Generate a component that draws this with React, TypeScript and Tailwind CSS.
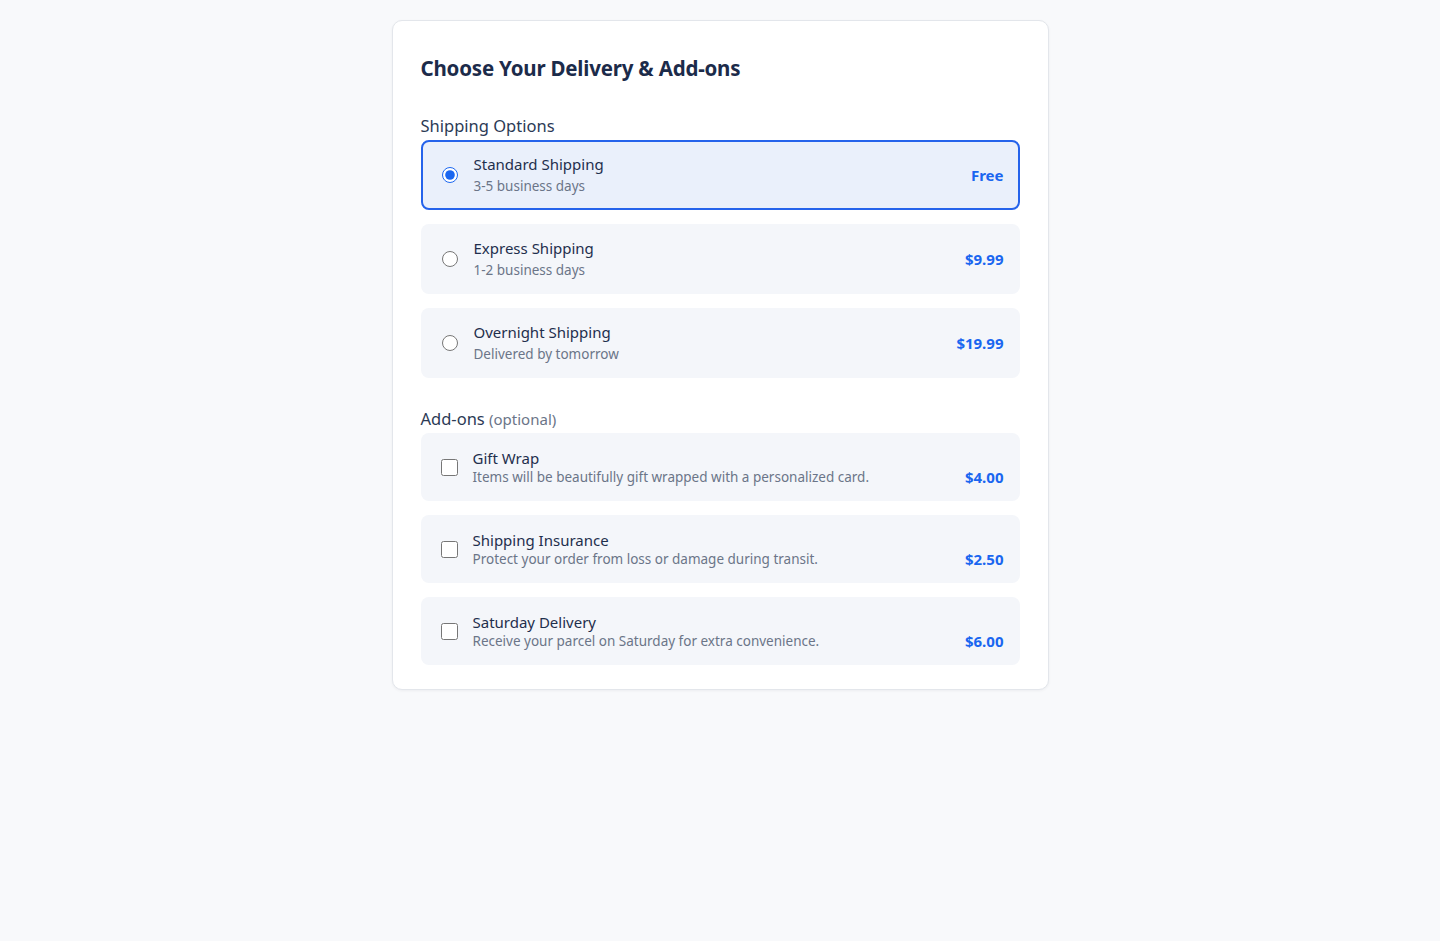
import React, { useState } from "react";

type ShippingOption = {
  id: string;
  title: string;
  subtitle: string;
  price: string;
};

type AddOn = {
  id: string;
  title: string;
  description: string;
  price: string;
};

const shippingOptions: ShippingOption[] = [
  { id: "standard", title: "Standard Shipping", subtitle: "3-5 business days", price: "Free" },
  { id: "express", title: "Express Shipping", subtitle: "1-2 business days", price: "$9.99" },
  { id: "overnight", title: "Overnight Shipping", subtitle: "Delivered by tomorrow", price: "$19.99" },
];

const addOns: AddOn[] = [
  {
    id: "gift",
    title: "Gift Wrap",
    description: "Items will be beautifully gift wrapped with a personalized card.",
    price: "$4.00",
  },
  {
    id: "insurance",
    title: "Shipping Insurance",
    description: "Protect your order from loss or damage during transit.",
    price: "$2.50",
  },
  {
    id: "saturday",
    title: "Saturday Delivery",
    description: "Receive your parcel on Saturday for extra convenience.",
    price: "$6.00",
  },
];

export default function App() {
  const [shipping, setShipping] = useState("standard");
  const [selected, setSelected] = useState<string[]>([]);

  const toggle = (id: string) => {
    setSelected((prev) => (prev.includes(id) ? prev.filter((x) => x !== id) : [...prev, id]));
  };

  return (
    <div className="min-h-screen bg-[#f8f9fb] pt-5 font-['Noto_Sans',sans-serif]">
      <section className="mx-auto w-[657px] rounded-[10px] border border-[#e3e6eb] bg-white px-7 pb-6 pt-[33px] shadow-[0_1px_3px_rgba(15,23,42,0.05)]">
        <h1 className="text-[20.5px] font-bold leading-[28px] tracking-[-0.2px] text-[#1c2b4a]">
          Choose Your Delivery &amp; Add-ons
        </h1>

        <h2 className="mt-[33px] text-[16.5px] leading-[22px] text-[#2b3a55]">Shipping Options</h2>
        <div className="mt-[3px] flex flex-col gap-[14px]">
          {shippingOptions.map((opt) => {
            const isActive = opt.id === shipping;
            return (
              <label
                key={opt.id}
                className={`flex h-[70px] cursor-pointer items-center rounded-lg border-2 pl-[19px] pr-[14px] ${
                  isActive ? "border-[#2563eb] bg-[#eaf0fb]" : "border-transparent bg-[#f4f6fa]"
                }`}
              >
                <input
                  type="radio"
                  name="shipping"
                  checked={isActive}
                  onChange={() => setShipping(opt.id)}
                  className="h-4 w-4 accent-[#1a66f0]"
                />
                <div className="ml-[16px] flex-1">
                  <p className="text-[15px] leading-[20px] text-[#1f2f4d]">{opt.title}</p>
                  <p className="mt-[3px] text-[13.5px] leading-[19px] text-[#6b7588]">{opt.subtitle}</p>
                </div>
                <span className="text-[15px] font-bold text-[#1a66f0]">{opt.price}</span>
              </label>
            );
          })}
        </div>

        <h2 className="mt-[30px] text-[16.5px] leading-[22px] text-[#2b3a55]">
          Add-ons <span className="text-[15px] text-[#6b7588]">(optional)</span>
        </h2>
        <div className="mt-[3px] flex flex-col gap-[14px]">
          {addOns.map((item) => (
            <label
              key={item.id}
              className="flex h-[68px] cursor-pointer items-center rounded-lg bg-[#f4f6fa] pl-5 pr-4"
            >
              <input
                type="checkbox"
                checked={selected.includes(item.id)}
                onChange={() => toggle(item.id)}
                className="h-[17px] w-[17px] accent-[#1a66f0]"
              />
              <div className="ml-[15px] flex flex-1 items-end justify-between">
                <div>
                  <p className="text-[15px] leading-[20px] text-[#1f2f4d]">{item.title}</p>
                  <p className="text-[13.5px] leading-[19px] text-[#6b7588]">{item.description}</p>
                </div>
                <span className="text-[15px] font-bold leading-[19px] text-[#1a66f0]">{item.price}</span>
              </div>
            </label>
          ))}
        </div>
      </section>
    </div>
  );
}
